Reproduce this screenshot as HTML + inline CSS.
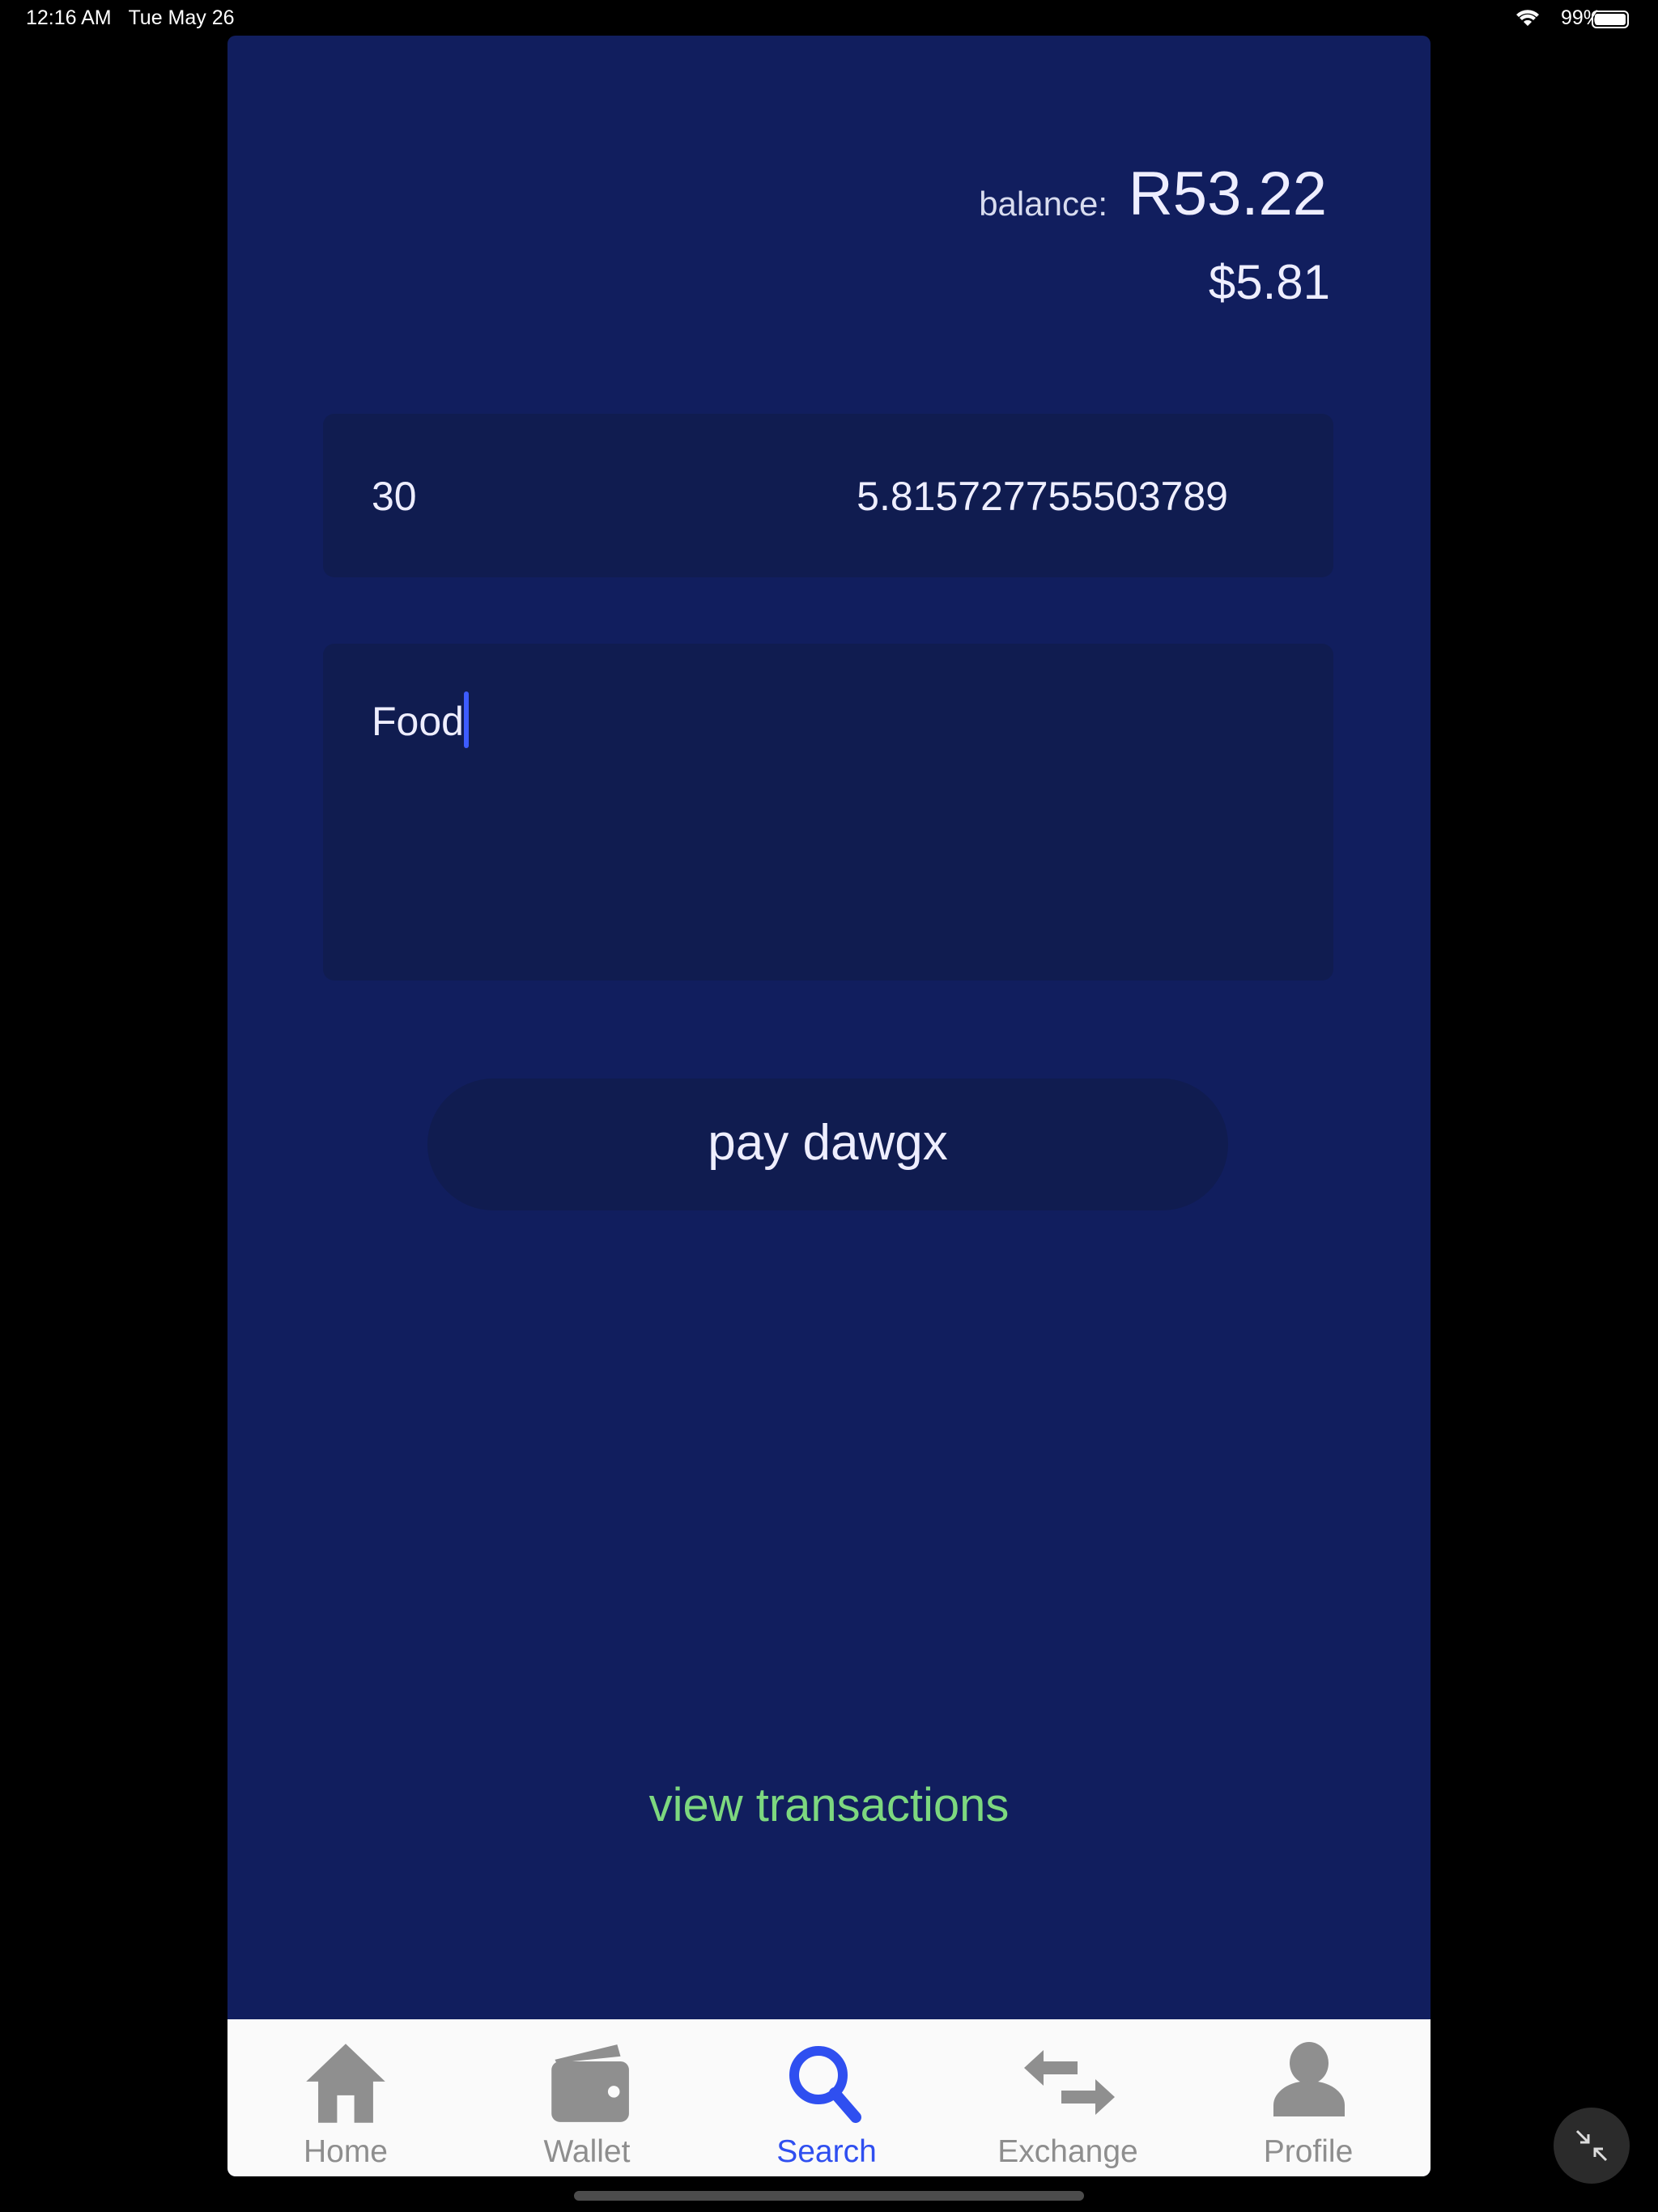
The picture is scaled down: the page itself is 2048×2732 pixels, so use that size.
<!DOCTYPE html>
<html><head><meta charset="utf-8"><style>
*{margin:0;padding:0;box-sizing:border-box}
body{width:2048px;height:2732px;background:#000;position:relative;overflow:hidden;font-family:"Liberation Sans",sans-serif}
.sb{position:absolute;top:8px;color:#fff;font-size:25px}
.panel{position:absolute;left:281px;top:44px;width:1486px;height:2644px;background:#111e5e;border-radius:10px;overflow:hidden}
.t{position:absolute;color:#eef;white-space:nowrap;font-family:"Liberation Sans",sans-serif}
.box{position:absolute;background:#101c50;border-radius:14px}
.tab{position:absolute;left:0;top:2450px;width:1486px;height:194px;background:#fafafa}
.lbl{position:absolute;top:2592px;width:300px;margin-left:-150px;text-align:center;font-size:39px;color:#8e8e8e}
</style></head><body>
<div class="sb" style="left:32px">12:16 AM&nbsp;&nbsp;&nbsp;Tue May 26</div>
<div class="sb" style="right:70px">99%</div>
<svg style="position:absolute;left:1872px;top:12px" width="30" height="22" viewBox="0 0 30 22"><path d="M15 20 L10 15 A7 7 0 0 1 20 15Z M5 10 A14 14 0 0 1 25 10 L22 13 A10 10 0 0 0 8 13Z M1 6 A20 20 0 0 1 29 6 L26 9 A16 16 0 0 0 4 9Z" fill="#fff"/></svg>
<div style="position:absolute;left:1966px;top:13px;width:46px;height:22px;border:2px solid #fff;border-radius:6px;padding:2px"><div style="width:100%;height:100%;background:#fff;border-radius:3px"></div></div>
<div class="panel">
<div class="t" style="right:399px;top:184px;font-size:42px;color:#d8dcef">balance:</div>
<div class="t" style="right:128px;top:152px;font-size:76px">R53.22</div>
<div class="t" style="right:124px;top:270px;font-size:60px">$5.81</div>
<div class="box" style="left:118px;top:467px;width:1248px;height:202px"></div>
<div class="t" style="left:178px;top:540px;font-size:50px">30</div>
<div class="t" style="right:250px;top:540px;font-size:50px">5.815727755503789</div>
<div class="box" style="left:118px;top:751px;width:1248px;height:416px"></div>
<div class="t" style="left:178px;top:818px;font-size:50px">Food</div>
<div style="position:absolute;left:292px;top:810px;width:6px;height:70px;background:#3d5cff;border-radius:3px"></div>
<div class="box" style="left:247px;top:1288px;width:989px;height:163px;border-radius:82px"></div>
<div class="t" style="left:247px;width:989px;text-align:center;top:1332px;font-size:62px">pay dawgx</div>
<div class="t" style="left:0;width:1486px;text-align:center;top:2152px;font-size:58px;color:#7dd87f">view transactions</div>
<div class="tab"></div>
<svg style="position:absolute;left:92px;top:2476px" width="108" height="106" viewBox="0 0 100 100"><path d="M50 4 L96 48 L82 48 L82 96 L60 96 L60 64 L40 64 L40 96 L18 96 L18 48 L4 48Z" fill="#8f8f8f"/></svg>
<svg style="position:absolute;left:394px;top:2476px" width="104" height="106" viewBox="0 0 100 100"><path d="M10 22 L84 4 L88 18 L12 26Z" fill="#8f8f8f"/><rect x="6" y="24" width="92" height="72" rx="10" fill="#8f8f8f"/><circle cx="80" cy="60" r="7" fill="#fafafa"/></svg>
<svg style="position:absolute;left:690px;top:2476px" width="100" height="106" viewBox="0 0 100 100"><circle cx="40" cy="40" r="30" fill="none" stroke="#2f4ff0" stroke-width="12"/><path d="M60 62 L86 92" stroke="#2f4ff0" stroke-width="14" stroke-linecap="round"/></svg>
<svg style="position:absolute;left:978px;top:2480px" width="124" height="100" viewBox="0 0 120 100"><path d="M4 30 L28 8 L28 22 L70 22 L70 38 L28 38 L28 52Z M116 66 L92 44 L92 58 L50 58 L50 74 L92 74 L92 88Z" fill="#8f8f8f"/></svg>
<svg style="position:absolute;left:1286px;top:2476px" width="100" height="104" viewBox="0 0 100 104"><ellipse cx="50" cy="28" rx="24" ry="26" fill="#8f8f8f"/><path d="M6 94 L6 80 A44 30 0 0 1 94 80 L94 94Z" fill="#8f8f8f"/></svg>
<div class="lbl" style="left:146px">Home</div>
<div class="lbl" style="left:444px">Wallet</div>
<div class="lbl" style="left:740px;color:#2f4ff0">Search</div>
<div class="lbl" style="left:1038px">Exchange</div>
<div class="lbl" style="left:1335px">Profile</div>
</div>
<div style="position:absolute;left:709px;top:2706px;width:630px;height:12px;background:#4c4c4c;border-radius:6px"></div>
<div style="position:absolute;left:1919px;top:2603px;width:94px;height:94px;border-radius:50%;background:#2b2b2b"></div>
<svg style="position:absolute;left:1944px;top:2628px" width="44" height="44" viewBox="0 0 44 44"><path d="M4 4 L18 18 M18 8 L18 18 L8 18 M40 40 L26 26 M26 36 L26 26 L36 26" stroke="#ddd" stroke-width="3" fill="none"/></svg>
</body></html>
